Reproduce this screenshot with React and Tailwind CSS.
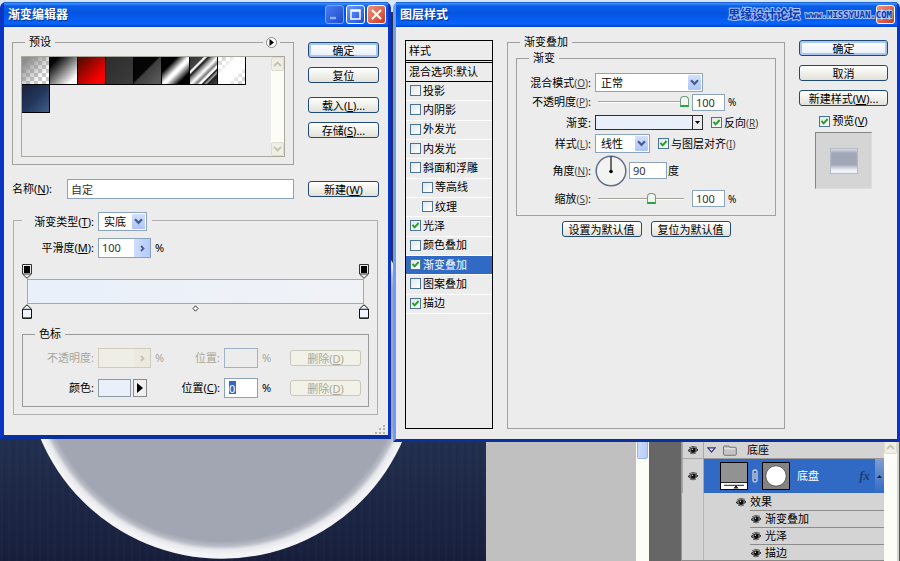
import React from "react";

function Key({ children, small }) {
  return (
    <span className={small ? "text-[10px] text-[#444]" : ""}>
      (<u className="underline underline-offset-1">{children}</u>)
    </span>
  );
}

function Button({ children, primary, disabled }) {
  const look = disabled
    ? "border-[#c9c7ba] bg-[#f3f2e8] text-[#a9a798]"
    : primary
      ? "border-[#1f4a78] bg-gradient-to-b from-white to-[#e8edf5] text-black shadow-[inset_0_0_0_2px_#a9c6f0]"
      : "border-[#1f4a78] bg-gradient-to-b from-white to-[#e2e1d8] text-black";
  return (
    <button
      type="button"
      disabled={disabled}
      className={`flex h-4 w-full items-center justify-center whitespace-nowrap rounded-[3px] border leading-none ${look}`}
    >
      {children}
    </button>
  );
}

function Check({ id, checked }) {
  return (
    <span className="inline-grid shrink-0">
      <input
        id={id}
        type="checkbox"
        defaultChecked={checked}
        className="peer col-start-1 row-start-1 size-[11px] appearance-none border border-[#4a7394] bg-gradient-to-br from-[#e3e6e6] to-white"
      />
      <svg
        viewBox="0 0 11 11"
        className="pointer-events-none col-start-1 row-start-1 hidden size-[11px] peer-checked:block"
      >
        <path d="M2.5 4.8 L4.6 7.3 L8.6 3" fill="none" stroke="#21a121" strokeWidth="1.9" />
      </svg>
    </span>
  );
}

function Combo({ id, value, label }) {
  return (
    <span className="inline-grid w-full">
      <select
        id={id}
        aria-label={label}
        defaultValue={value}
        className="col-start-1 row-start-1 h-[19px] w-full appearance-none border border-[#8ba4bd] bg-white pl-[5px] leading-none text-black"
      >
        <option>{value}</option>
      </select>
      <span className="pointer-events-none col-start-1 row-start-1 m-[2px] flex h-[15px] w-[13px] items-center justify-center justify-self-end rounded-[1px] bg-gradient-to-b from-[#d3e0fd] to-[#adc4f5]">
        <svg viewBox="0 0 9 7" className="h-[7px] w-[9px]">
          <path d="M1 1.2 L4.5 4.8 L8 1.2" fill="none" stroke="#44608f" strokeWidth="2.2" />
        </svg>
      </span>
    </span>
  );
}

function Spin({ id, value, disabled }) {
  return (
    <span
      className={`flex h-5 w-full border ${disabled ? "border-[#cfccbd] bg-[#efeee6]" : "border-[#8ba4bd] bg-white"}`}
    >
      <input
        id={id}
        type="text"
        defaultValue={value}
        disabled={disabled}
        className="w-0 min-w-0 flex-1 bg-transparent pl-[3px] text-[#333]"
      />
      <button
        type="button"
        aria-label="调整"
        disabled={disabled}
        className={`flex w-4 items-center justify-center ${disabled ? "bg-[#eceadf] text-[#c4c2b4]" : "bg-gradient-to-r from-[#cfdefd] to-[#b4caf8] text-[#44608f]"}`}
      >
        <svg viewBox="0 0 5 7" className="h-[7px] w-[5px]">
          <path d="M1 1 L3.5 3.5 L1 6" fill="none" stroke="currentColor" strokeWidth="1.8" />
        </svg>
      </button>
    </span>
  );
}

function Field({ id, value, label, className }) {
  return (
    <input
      id={id}
      aria-label={label}
      type="text"
      defaultValue={value}
      className={`border border-[#8ba4bd] bg-white pl-[3px] text-[#333] ${className}`}
    />
  );
}

function Slider({ id, value, label, className }) {
  return (
    <input
      id={id}
      aria-label={label}
      type="range"
      min="0"
      max="100"
      defaultValue={value}
      className={`h-3 appearance-none bg-transparent [&::-webkit-slider-runnable-track]:h-[2px] [&::-webkit-slider-runnable-track]:border-t [&::-webkit-slider-runnable-track]:border-[#a5a398] [&::-webkit-slider-runnable-track]:bg-white [&::-webkit-slider-thumb]:-mt-[6px] [&::-webkit-slider-thumb]:h-[11px] [&::-webkit-slider-thumb]:w-[9px] [&::-webkit-slider-thumb]:appearance-none [&::-webkit-slider-thumb]:rounded-t-[4px] [&::-webkit-slider-thumb]:border [&::-webkit-slider-thumb]:border-b-2 [&::-webkit-slider-thumb]:border-[#6f9c80] [&::-webkit-slider-thumb]:border-b-[#27a848] [&::-webkit-slider-thumb]:bg-[#f4f6f2] ${className}`}
    />
  );
}

function TitleButton({ kind }) {
  const close = kind === "close";
  const minimise = kind === "min";
  return (
    <button
      type="button"
      aria-label={close ? "关闭" : minimise ? "最小化" : "最大化"}
      className={`flex size-[19px] items-center justify-center rounded-[3px] border ${
        close
          ? "border-white bg-gradient-to-br from-[#f0927a] to-[#c8371a]"
          : minimise
            ? "border-[#7fa1ee] bg-gradient-to-br from-[#4d7df0] to-[#1c48cf]"
            : "border-white bg-gradient-to-br from-[#6c9bfa] to-[#1c4fdc]"
      }`}
    >
      <svg viewBox="0 0 17 17" className="size-[17px]">
        {close && <path d="M4 4 L13 13 M13 4 L4 13" stroke="#fff" strokeWidth="2.2" />}
        {minimise && <path d="M4 12 H10" stroke="#8fb0f5" strokeWidth="2.4" />}
        {kind === "max" && (
          <path d="M3.5 4 H13.5 M4 3.5 V13 H13 V3.5 M3.5 5 H13.5" fill="none" stroke="#fff" strokeWidth="1.5" />
        )}
      </svg>
    </button>
  );
}

function TitleBar({ title, children }) {
  return (
    <header className="flex h-[25px] items-center justify-between bg-[linear-gradient(to_bottom,#0a50c8_0%,#3a8dfa_6%,#0a5fe8_16%,#0553e0_45%,#0560f5_75%,#0564fa_88%,#0340c4_100%)] pr-[2px] pl-1">
      <h1 className="text-[12px] leading-none font-bold text-white [text-shadow:1px_1px_0_#0a2f8c]">{title}</h1>
      <div className="flex items-center gap-[2px]">{children}</div>
    </header>
  );
}

function Eye() {
  return (
    <svg viewBox="0 0 12 10" className="h-[10px] w-3 shrink-0">
      <path d="M1 5.5 Q6 0.5 11 4.8 Q6.5 10 1 5.5 Z" fill="#777" stroke="#222" strokeWidth="0.9" />
      <circle cx="6.2" cy="5.1" r="2.3" fill="#0b0b0b" />
      <circle cx="5.4" cy="4.3" r="0.7" fill="#ddd" />
      <path d="M2 2.8 Q6 0 10 2.4 M3 8.2 Q6 9.6 9 8" fill="none" stroke="#444" strokeWidth="0.8" />
    </svg>
  );
}

function OpacityStop() {
  return (
    <svg viewBox="0 0 10 15" className="h-[15px] w-[10px]">
      <path d="M0.5 0.5 H9.5 V10 L5 14.3 L0.5 10 Z" fill="#ececec" stroke="#333" />
      <rect x="2" y="2" width="6" height="7" fill="#000" />
      <path d="M1 10 H9" stroke="#333" />
    </svg>
  );
}

function ColorStop() {
  return (
    <svg viewBox="0 0 10 15" className="h-[15px] w-[10px]">
      <path d="M0.5 14.3 V5 L5 0.8 L9.5 5 V14.3 Z" fill="#f1f4fa" stroke="#111" />
      <path d="M1 5.3 H9 M1 14 H9" stroke="#111" />
    </svg>
  );
}

const SWATCHES = [
  "bg-[linear-gradient(135deg,#8f8f8f_15%,#8f8f8f00_75%),repeating-conic-gradient(#c8c8c8_0_25%,#fff_0_50%)] bg-[length:auto,8px_8px]",
  "bg-[linear-gradient(135deg,#000_15%,#fff_85%)]",
  "bg-[linear-gradient(135deg,#5e0a00_10%,#ff0000_80%)]",
  "bg-[linear-gradient(135deg,#2c2c2c,#3c3c3c)]",
  "bg-[linear-gradient(135deg,#050505_45%,#3e3e3e_50%,#5a5a5a_90%)]",
  "bg-[linear-gradient(135deg,#000_28%,#fff_50%,#fff_56%,#000_80%)]",
  "bg-[linear-gradient(135deg,#333_0%,#444_24%,#eee_27%,#eee_30%,#111_34%,#777_40%,#fff_52%,#777_62%,#fff_67%,#fff_70%,#111_73%,#aaa_79%,#222_83%,#444_100%)]",
  "bg-[linear-gradient(135deg,#ffffff33_10%,#fff_40%,#fff_62%,#ffffff33_85%),repeating-conic-gradient(#c8c8c8_0_25%,#fff_0_50%)] bg-[length:auto,8px_8px]",
  "bg-[linear-gradient(135deg,#1c2440_10%,#22365a_50%,#3f5f8a_100%)]",
];

function ScrollArrow({ up }) {
  return (
    <button
      type="button"
      aria-label={up ? "向上滚动" : "向下滚动"}
      className="flex h-[14px] w-full items-center justify-center rounded-[2px] border border-[#dddccf] bg-[#f0efe6]"
    >
      <svg viewBox="0 0 9 6" className="h-[6px] w-[9px]">
        <path d={up ? "M1 5 L4.5 1.5 L8 5" : "M1 1 L4.5 4.5 L8 1"} fill="none" stroke="#c3c2b6" strokeWidth="1.8" />
      </svg>
    </button>
  );
}

function GradientEditor() {
  return (
    <section className="absolute top-[2px] left-0 w-[391px] rounded-t-[6px] border-r-[3px] border-b-4 border-l-4 border-[#0a35c4] border-b-[#0a2f9e] bg-[#0a35c4]">
      <TitleBar title="渐变编辑器">
        <TitleButton kind="min" />
        <TitleButton kind="max" />
        <TitleButton kind="close" />
      </TitleBar>
      <div className="bg-[#ececec] pt-2 pr-[9px] pl-2">
        <div className="grid grid-cols-[1fr_71px] gap-[14px]">
          <fieldset className="relative min-w-0 border border-[#a0a0a0] px-2 pb-[7px]">
            <legend className="ml-1 h-[14px] px-1 leading-[14px]">预设</legend>
            <button
              type="button"
              aria-label="预设菜单"
              className="absolute -top-3 right-4 flex size-[11px] items-center justify-center rounded-full border border-[#888] bg-white ring-3 ring-[#ececec]"
            >
              <svg viewBox="0 0 5 7" className="h-[7px] w-[5px]">
                <path d="M0.5 0 L5 3.5 L0.5 7 Z" fill="#000" />
              </svg>
            </button>
            <div className="mt-[7px] flex h-[101px] border border-[#aaa89c]">
              <ul className="flex flex-1 flex-wrap content-start">
                {SWATCHES.map((s, i) => (
                  <li key={i} className={`size-7 border-r border-b border-black ${s}`} />
                ))}
              </ul>
              <div className="flex w-[13px] flex-col justify-between bg-[#fdfdf8]">
                <ScrollArrow up />
                <ScrollArrow />
              </div>
            </div>
          </fieldset>
          <div className="flex flex-col gap-[14px] pt-[7px]">
            <div className="flex flex-col gap-[9px]">
              <Button primary>确定</Button>
              <Button>复位</Button>
            </div>
            <div className="flex flex-col gap-[9px]">
              <Button>载入<Key>L</Key>...</Button>
              <Button>存储<Key>S</Key>...</Button>
            </div>
          </div>
        </div>

        <div className="mt-[14px] grid grid-cols-[52px_1fr_71px] items-center">
          <label htmlFor="grad-name">名称<Key>N</Key>:</label>
          <Field id="grad-name" value="自定" className="mr-[14px] ml-[3px] h-5" />
          <Button>新建<Key>W</Key></Button>
        </div>

        <fieldset className="mx-px mt-[13px] min-w-0 border border-[#b0b0b0] px-2 pb-[7px]">
          <legend className="h-4 pr-[5px]">
            <span className="grid grid-cols-[72px_49px] items-center gap-1">
              <label htmlFor="grad-type" className="text-right whitespace-nowrap">渐变类型<Key>T</Key>:</label>
              <Combo id="grad-type" value="实底" />
            </span>
          </legend>
          <div className="mt-[10px] grid grid-cols-[72px_53px_1fr] items-center gap-1">
            <label htmlFor="smooth" className="text-right">平滑度<Key>M</Key>:</label>
            <Spin id="smooth" value="100" />
            <span>%</span>
          </div>

          <div className="mt-[6px]">
            <div className="flex justify-between">
              <OpacityStop />
              <OpacityStop />
            </div>
            <div className="mx-[5px] h-[25px] border border-[#a8a8a8] bg-gradient-to-r from-[#e9f0fa] to-[#f0f2f6]" />
            <div className="flex justify-between">
              <ColorStop />
              <svg viewBox="0 0 7 15" className="h-[15px] w-[7px]">
                <path d="M3.5 1.8 L6 4.5 L3.5 7.2 L1 4.5 Z" fill="#fff" stroke="#333" />
              </svg>
              <ColorStop />
            </div>
          </div>

          <fieldset className="mt-2 min-w-0 border border-[#9a9a9a] pb-2">
            <legend className="ml-3 h-[14px] px-1 leading-[14px]">色标</legend>
            <div className="mt-[7px] grid grid-cols-[71px_53px_14px_47px_34px_24px_71px] items-center gap-x-1 text-[#a9a798]">
              <label htmlFor="stop-opacity" className="text-right">不透明度:</label>
              <Spin id="stop-opacity" value="" disabled />
              <span>%</span>
              <label htmlFor="stop-loc-a" className="text-right">位置:</label>
              <input id="stop-loc-a" disabled className="h-5 w-full border border-[#9fb3c8] bg-[#ececec]" />
              <span>%</span>
              <Button disabled>删除<Key>D</Key></Button>
            </div>
            <div className="mt-[10px] grid grid-cols-[71px_53px_14px_47px_34px_24px_71px] items-center gap-x-1">
              <span className="text-right">颜色:</span>
              <span className="flex gap-[2px]">
                <button type="button" aria-label="颜色" className="h-[18px] w-[33px] border border-[#8f9aa8] bg-[#eaf0fa]" />
                <button
                  type="button"
                  aria-label="颜色菜单"
                  className="flex h-[18px] w-[14px] items-center justify-center border border-[#8a8a8a] bg-[#f0f0f0]"
                >
                  <svg viewBox="0 0 6 10" className="h-[10px] w-[6px]">
                    <path d="M0 0 L6 5 L0 10 Z" fill="#000" />
                  </svg>
                </button>
              </span>
              <span />
              <label htmlFor="stop-loc-b" className="text-right whitespace-nowrap">位置<Key>C</Key>:</label>
              <input
                id="stop-loc-b"
                type="text"
                defaultValue="0"
                className="h-5 w-full border border-[#8ba4bd] bg-white bg-[linear-gradient(#316ac5,#316ac5)] bg-[length:7px_13px] bg-[position:4px_2px] bg-no-repeat pl-1 text-white"
              />
              <span>%</span>
              <Button disabled>删除<Key>D</Key></Button>
            </div>
          </fieldset>
        </fieldset>
        <div className="flex h-5 items-end justify-end">
          <svg viewBox="0 0 12 12" className="-mr-2 h-3 w-3">
            <path
              d="M8 2h2v2h-2z M4 5h2v2h-2z M8 5h2v2h-2z M0 9h2v2h-2z M4 9h2v2h-2z M8 9h2v2h-2z"
              fill="#b4b2a6"
            />
          </svg>
        </div>
      </div>
    </section>
  );
}

const STYLES = [
  { name: "投影" },
  { name: "内阴影" },
  { name: "外发光" },
  { name: "内发光" },
  { name: "斜面和浮雕" },
  { name: "等高线", sub: true },
  { name: "纹理", sub: true },
  { name: "光泽", on: true },
  { name: "颜色叠加" },
  { name: "渐变叠加", on: true, selected: true },
  { name: "图案叠加" },
  { name: "描边", on: true },
];

const ROW = "grid grid-cols-[74px_1fr] items-center gap-1";

function LayerStyle() {
  return (
    <section className="absolute top-[2px] right-0 left-[393px] rounded-t-[6px] border-x-[3px] border-b-[3px] border-[#0a35c4] border-b-[#0a2f9e] border-l-[#6f9cf0] bg-[#0a35c4]">
      <TitleBar title="图层样式">
        <TitleButton kind="close" />
      </TitleBar>
      <p className="absolute top-[7px] right-[5px] flex items-center gap-[5px] leading-none text-[#0a37b0] [-webkit-text-stroke:2px_#a5c3fb] [paint-order:stroke]">
        <span className="text-[12px] font-bold">思缘设计论坛</span>
        <span className="font-['DejaVu_Sans_Mono',monospace] text-[9px] font-bold">www.MISSYUAN.COM</span>
      </p>
      <div className="grid grid-cols-[88px_1fr_89px] gap-[14px] bg-[#ececec] px-[9px] pt-2 pb-[10px]">
        <div className="mt-[5px] h-[389px] border border-black">
          <h2 className="flex h-5 items-center border-b border-black pl-[3px]">样式</h2>
          <h2 className="mt-px flex h-5 items-center border-y border-black pl-[3px] whitespace-nowrap">
            混合选项:默认
          </h2>
          <ul className="grid h-[232px] auto-rows-fr">
            {STYLES.map((s, i) => (
              <li
                key={s.name}
                className={`flex items-center gap-[2px] border-b border-white pb-px ${s.sub ? "pl-4" : "pl-1"} ${s.selected ? "bg-[#316ac5] text-white" : ""}`}
              >
                <Check id={`style-${i}`} checked={s.on} />
                <label htmlFor={`style-${i}`} className="leading-[14px]">{s.name}</label>
              </li>
            ))}
          </ul>
        </div>

        <fieldset className="min-w-0 border border-[#a0a0a0] px-2">
          <legend className="ml-1 h-[14px] px-1 leading-[14px]">渐变叠加</legend>
          <fieldset className="mt-[2px] min-w-0 border border-[#a0a0a0] pb-[5px]">
            <legend className="ml-3 h-[14px] px-1 leading-[14px]">渐变</legend>
            <div className={`${ROW} mt-2 h-[19px]`}>
              <label htmlFor="blend" className="text-right">混合模式<Key small>O</Key>:</label>
              <span className="flex w-[108px]"><Combo id="blend" value="正常" /></span>
            </div>
            <div className={`${ROW} h-5`}>
              <label htmlFor="opacity" className="text-right">不透明度<Key small>P</Key>:</label>
              <span className="flex items-center gap-[3px]">
                <Slider id="opacity" value="100" className="ml-[3px] w-[91px]" />
                <Field value="100" label="不透明度" className="h-[17px] w-[33px]" />
                <span className="text-[10px]">%</span>
              </span>
            </div>
            <div className={`${ROW} h-[21px]`}>
              <span className="text-right">渐变:</span>
              <span className="flex items-center">
                <button
                  type="button"
                  aria-label="渐变"
                  className="flex h-[15px] w-[108px] justify-end border border-[#2b2b33] bg-[#eaf0fa]"
                >
                  <span className="flex h-full w-[10px] items-center justify-center border-l border-[#2b2b33] bg-[#ececec]">
                    <svg viewBox="0 0 5 3" className="h-[3px] w-[5px]">
                      <path d="M0 0 H5 L2.5 3 Z" fill="#000" />
                    </svg>
                  </span>
                </button>
                <span className="ml-2 flex items-center gap-[2px]">
                  <Check id="reverse" checked />
                  <label htmlFor="reverse">反向<Key small>R</Key></label>
                </span>
              </span>
            </div>
            <div className={`${ROW} h-[21px]`}>
              <label htmlFor="grad-style" className="text-right">样式<Key small>L</Key>:</label>
              <span className="flex items-center">
                <span className="flex w-[55px]"><Combo id="grad-style" value="线性" /></span>
                <span className="ml-2 flex items-center gap-[2px]">
                  <Check id="align" checked />
                  <label htmlFor="align" className="whitespace-nowrap">与图层对齐<Key small>I</Key></label>
                </span>
              </span>
            </div>
            <div className={`${ROW} h-[33px]`}>
              <label htmlFor="angle" className="text-right">角度<Key small>N</Key>:</label>
              <span className="flex items-center">
                <svg viewBox="0 0 32 32" className="size-8">
                  <circle cx="16" cy="16" r="14.8" fill="#f3f3f1" stroke="#5f6d8c" strokeWidth="1.5" />
                  <path d="M16 1.5 V16" stroke="#111" strokeWidth="1.2" />
                  <circle cx="16" cy="16.5" r="1.8" fill="#000" />
                </svg>
                <Field id="angle" value="90" className="ml-[2px] h-[17px] w-[38px]" />
                <span className="ml-px">度</span>
              </span>
            </div>
            <div className={`${ROW} h-[23px]`}>
              <label htmlFor="scale" className="text-right">缩放<Key small>S</Key>:</label>
              <span className="flex items-center gap-[3px]">
                <Slider id="scale" value="64" className="mr-[5px] ml-[3px] w-[86px]" />
                <Field value="100" label="缩放" className="h-[17px] w-[33px]" />
                <span className="text-[10px]">%</span>
              </span>
            </div>
          </fieldset>
          <div className="mt-[5px] grid grid-cols-[80px_80px] justify-center gap-[9px]">
            <Button>设置为默认值</Button>
            <Button>复位为默认值</Button>
          </div>
        </fieldset>

        <div className="flex flex-col gap-[9px] pt-[5px]">
          <Button primary>确定</Button>
          <Button>取消</Button>
          <Button>新建样式<Key>W</Key>...</Button>
          <div className="flex flex-col items-center gap-[5px]">
            <span className="inline-flex h-3 items-center gap-[2px]">
              <Check id="preview" checked />
              <label htmlFor="preview">预览<Key>V</Key></label>
            </span>
            <div className="flex size-[57px] items-center justify-center border border-[#dcdcdc] border-t-[#858585] border-l-[#858585] bg-[#d5d5d5]">
              <div className="h-[26px] w-7 border border-[#b4bac8] bg-[linear-gradient(to_bottom,#d5dae4_0%,#a1a7b6_18%,#a1a7b6_65%,#eef2f8_88%)]" />
            </div>
          </div>
        </div>
      </div>
    </section>
  );
}

function Canvas() {
  return (
    <svg viewBox="0 0 486 561" className="h-[561px] w-[486px]">
      <defs>
        <linearGradient id="navy" x1="0" y1="0" x2="0" y2="1">
          <stop offset="0.78" stopColor="#22304f" />
          <stop offset="1" stopColor="#181f3c" />
        </linearGradient>
        <pattern id="brush" width="23" height="561" patternUnits="userSpaceOnUse">
          <path d="M2 0V561M9 0V561M17 0V561" stroke="#3c5278" strokeOpacity="0.12" />
          <path d="M5 0V561M13 0V561M20 0V561" stroke="#0a1026" strokeOpacity="0.12" />
        </pattern>
        <radialGradient id="disc" cx="0.5" cy="0.49" r="0.5" fx="0.5" fy="0.49">
          <stop offset="0.93" stopColor="#a2a6b2" />
          <stop offset="0.955" stopColor="#b9bcc5" />
          <stop offset="0.975" stopColor="#e6e8ec" />
          <stop offset="1" stopColor="#f4f4f7" />
        </radialGradient>
      </defs>
      <rect width="486" height="561" fill="url(#navy)" />
      <rect width="486" height="561" fill="url(#brush)" />
      <circle cx="222" cy="361.6" r="197.2" fill="url(#disc)" />
    </svg>
  );
}

function LayersPanel() {
  return (
    <aside className="flex w-[219px] border-l border-[#999] bg-[#d4d4d4]">
      <div className="flex flex-1 flex-col justify-end border-b border-[#8a8a8a]">
        <div className="grid h-[18px] grid-cols-[22px_1fr]">
          <span className="flex items-center justify-center border border-t-0 border-[#a8a8a8]"><Eye /></span>
          <div className="flex items-center border-b border-[#999] pl-[3px]">
            <svg viewBox="0 0 9 6" className="h-[6px] w-[9px]">
              <path d="M0.8 0.8 H8.2 L4.5 5 Z" fill="#e6e6f2" stroke="#38387a" strokeWidth="1.2" />
            </svg>
            <svg viewBox="0 0 14 12" className="ml-[7px] h-3 w-[14px]">
              <path d="M0.5 3 Q0.5 2 1.5 2 H6 L7 3.3 H12.3 Q13.3 3.3 13.3 4.3 V10 Q13.3 11.3 12 11.3 H1.8 Q0.5 11.3 0.5 10 Z" fill="#c4c4c4" stroke="#777" />
              <path d="M1.5 4.8 H12" stroke="#eee" />
            </svg>
            <span className="ml-[10px]">底座</span>
          </div>
        </div>
        <div className="grid h-[34px] grid-cols-[22px_1fr]">
          <span className="flex items-center justify-center border border-t-0 border-b-0 border-[#a8a8a8]"><Eye /></span>
          <div className="flex items-center bg-[#316ac5] pl-4 text-white">
            <svg viewBox="0 0 28 28" className="size-7">
              <rect x="0.5" y="0.5" width="27" height="27" fill="#929292" stroke="#000" />
              <rect x="1" y="21" width="26" height="6" fill="#fff" />
              <path d="M1 20.5 H27 M4 23.3 H24" stroke="#222" />
              <path d="M16 23 L18.5 26.5 H13.5 Z" fill="#222" />
            </svg>
            <svg viewBox="0 0 8 14" className="mx-[3px] h-[14px] w-2">
              <path d="M2 5 V2.5 Q2 1 4 1 Q6 1 6 2.5 V5 M2 9 V11.5 Q2 13 4 13 Q6 13 6 11.5 V9 M2 5 V9 M6 5 V9 M4 4 V10" fill="none" stroke="#d0d0d0" strokeWidth="1.3" />
            </svg>
            <svg viewBox="0 0 28 28" className="size-7">
              <rect x="0.5" y="0.5" width="27" height="27" fill="#848484" stroke="#000" />
              <circle cx="14" cy="14" r="10.2" fill="#fff" stroke="#222" strokeWidth="0.6" />
            </svg>
            <span className="ml-[7px] flex-1">底盘</span>
            <span className="mr-[5px] font-['Liberation_Serif',serif] text-[13px] font-bold text-[#1c3c74] italic">fx</span>
            <button type="button" aria-label="折叠效果" className="flex h-full w-[9px] items-center justify-center bg-gradient-to-b from-[#7f9fd2] to-[#316ac5]">
              <svg viewBox="0 0 5 3" className="h-[3px] w-[5px]">
                <path d="M0 3 H5 L2.5 0 Z" fill="#222" />
              </svg>
            </button>
          </div>
        </div>
        <div className="grid grid-cols-[22px_1fr]">
          <span className="border-r border-[#b4b4b4]" />
          <ul className="-mb-px">
            <li className="ml-[31px] flex h-[17px] items-center gap-[3px]"><Eye />效果</li>
            {["渐变叠加", "光泽", "描边"].map((n) => (
              <li key={n} className="ml-[46px] flex h-[17px] items-center gap-[3px] border-t border-[#8c8c8c]">
                <Eye />{n}
              </li>
            ))}
          </ul>
        </div>
      </div>
      <div className="flex w-[13px] flex-col justify-end bg-[#fdfdf8]">
        <div className="h-[121px]"><ScrollArrow up /></div>
      </div>
      <div className="w-[3px] border-r border-[#555] bg-[#d4d4d4]" />
    </aside>
  );
}

export default function App() {
  return (
    <main className="relative h-screen min-h-[561px] w-full overflow-hidden bg-[#dce8f8] font-['Noto_Sans','Noto_Sans_CJK_SC',sans-serif] text-[11px] leading-[14px] text-black">
      <div className="flex h-full">
        <div className="flex shrink-0 flex-col justify-end">
          <Canvas />
        </div>
        <div className="flex-1 bg-[#c0c0c0]" />
        <div className="flex w-[13px] flex-col justify-end bg-[#fdfdf8]">
          <div className="flex h-[121px] items-start justify-center">
            <div className="h-[19px] w-[11px] rounded-[2px] border border-[#98b4ea] bg-gradient-to-r from-[#cbdafc] to-[#b9cdf8]" />
          </div>
        </div>
        <div className="w-8 bg-[#666]" />
        <LayersPanel />
      </div>
      <div className="absolute inset-x-0 top-0 h-3 bg-[#d6e6f8]" />
      <GradientEditor />
      <LayerStyle />
    </main>
  );
}
